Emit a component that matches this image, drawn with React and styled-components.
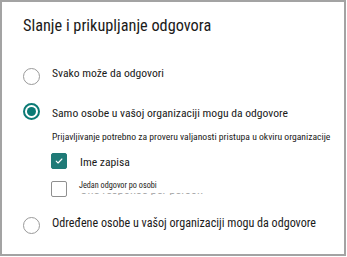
import styled, { createGlobalStyle } from "styled-components"

const GlobalStyle = createGlobalStyle`
  body {
    margin: 0;
    background: #ffffff;
    font-family: "Roboto Condensed", "Liberation Sans", Arial, sans-serif;
    color: #1b1a19;
  }
`

const Card = styled.div`
  box-sizing: border-box;
  width: 346px;
  height: 256px;
  border: 2px solid #a3a3a3;
  padding: 14px 0 0 21px;
  display: flex;
  flex-direction: column;
`

const Title = styled.h2`
  margin: 0;
  font-weight: 400;
  font-size: 16.3px;
  line-height: 20px;
  white-space: nowrap;
`

const OptionRow = styled.div`
  display: flex;
  align-items: flex-start;
  gap: 12px;
  margin-top: ${(p) => p.$top}px;
`

const Radio = styled.span`
  box-sizing: border-box;
  flex: none;
  width: 17px;
  height: 17px;
  margin-top: ${(p) => p.$offset || 0}px;
  border-radius: 50%;
  border: ${(p) => (p.$checked ? "2px solid #0b7a75" : "1.5px solid #9a9a9a")};
  display: flex;
  align-items: center;
  justify-content: center;

  &::after {
    content: "";
    display: ${(p) => (p.$checked ? "block" : "none")};
    width: 9px;
    height: 9px;
    border-radius: 50%;
    background: #0b7a75;
  }
`

const OptionLabel = styled.span`
  font-size: ${(p) => p.$size || 11.65}px;
  line-height: 14px;
  margin-top: ${(p) => p.$offset || 0}px;
  white-space: nowrap;
`

const Hint = styled.div`
  margin: 11px 0 0 29px;
  font-size: 9.65px;
  line-height: 12px;
  white-space: nowrap;
`

const CheckRow = styled.div`
  display: flex;
  align-items: flex-start;
  gap: ${(p) => p.$gap}px;
  margin: ${(p) => p.$top}px 0 0 28px;
`

const Box = styled.span`
  box-sizing: border-box;
  flex: none;
  width: 16px;
  height: 16px;
  margin-top: ${(p) => p.$offset || 0}px;
  border-radius: 2px;
  background: ${(p) => (p.$checked ? "#1f7a77" : "#ffffff")};
  border: 1px solid ${(p) => (p.$checked ? "#1f7a77" : "#8f8f8f")};
  display: flex;
  align-items: center;
  justify-content: center;
`

const CheckLabel = styled.span`
  font-size: 11.65px;
  line-height: 14px;
  margin-top: 2px;
  white-space: nowrap;
`

const Stack = styled.div`
  display: flex;
  flex-direction: column;
`

const SmallLabel = styled.span`
  font-size: 8.2px;
  line-height: 10px;
  white-space: nowrap;
`

/* the half-hidden original caption peeking out under the translated one */
const GhostLine = styled.div`
  height: 2px;
  margin: 3px 0 0 1px;
  overflow: hidden;

  span {
    display: block;
    margin-top: -9.6px;
    font-size: 12.5px;
    line-height: 14px;
    color: #aaaaaa;
    white-space: nowrap;
  }
`

const Check = () => (
  <svg width="10" height="10" viewBox="0 0 10 10" fill="none">
    <path d="M2.2 5.2 4.1 7 7.9 3" stroke="#ffffff" strokeWidth="1.1" strokeLinecap="round" strokeLinejoin="round" />
  </svg>
)

export default function App() {
  return (
    <>
      <GlobalStyle />
      <Card>
        <Title>Slanje i prikupljanje odgovora</Title>

        <OptionRow $top={30}>
          <Radio $offset={2} />
          <OptionLabel>Svako može da odgovori</OptionLabel>
        </OptionRow>

        <OptionRow $top={18}>
          <Radio $checked />
          <OptionLabel $offset={3}>Samo osobe u vašoj organizaciji mogu da odgovore</OptionLabel>
        </OptionRow>

        <Hint>Prijavljivanje potrebno za proveru valjanosti pristupa u okviru organizacije</Hint>

        <CheckRow $top={10} $gap={13}>
          <Box $checked>
            <Check />
          </Box>
          <CheckLabel>Ime zapisa</CheckLabel>
        </CheckRow>

        <CheckRow $top={11} $gap={12}>
          <Box $offset={1} />
          <Stack>
            <SmallLabel>Jedan odgovor po osobi</SmallLabel>
            <GhostLine>
              <span>One response per person</span>
            </GhostLine>
          </Stack>
        </CheckRow>

        <OptionRow $top={19}>
          <Radio $offset={1} />
          <OptionLabel $size={12.1}>Određene osobe u vašoj organizaciji mogu da odgovore</OptionLabel>
        </OptionRow>
      </Card>
    </>
  )
}
